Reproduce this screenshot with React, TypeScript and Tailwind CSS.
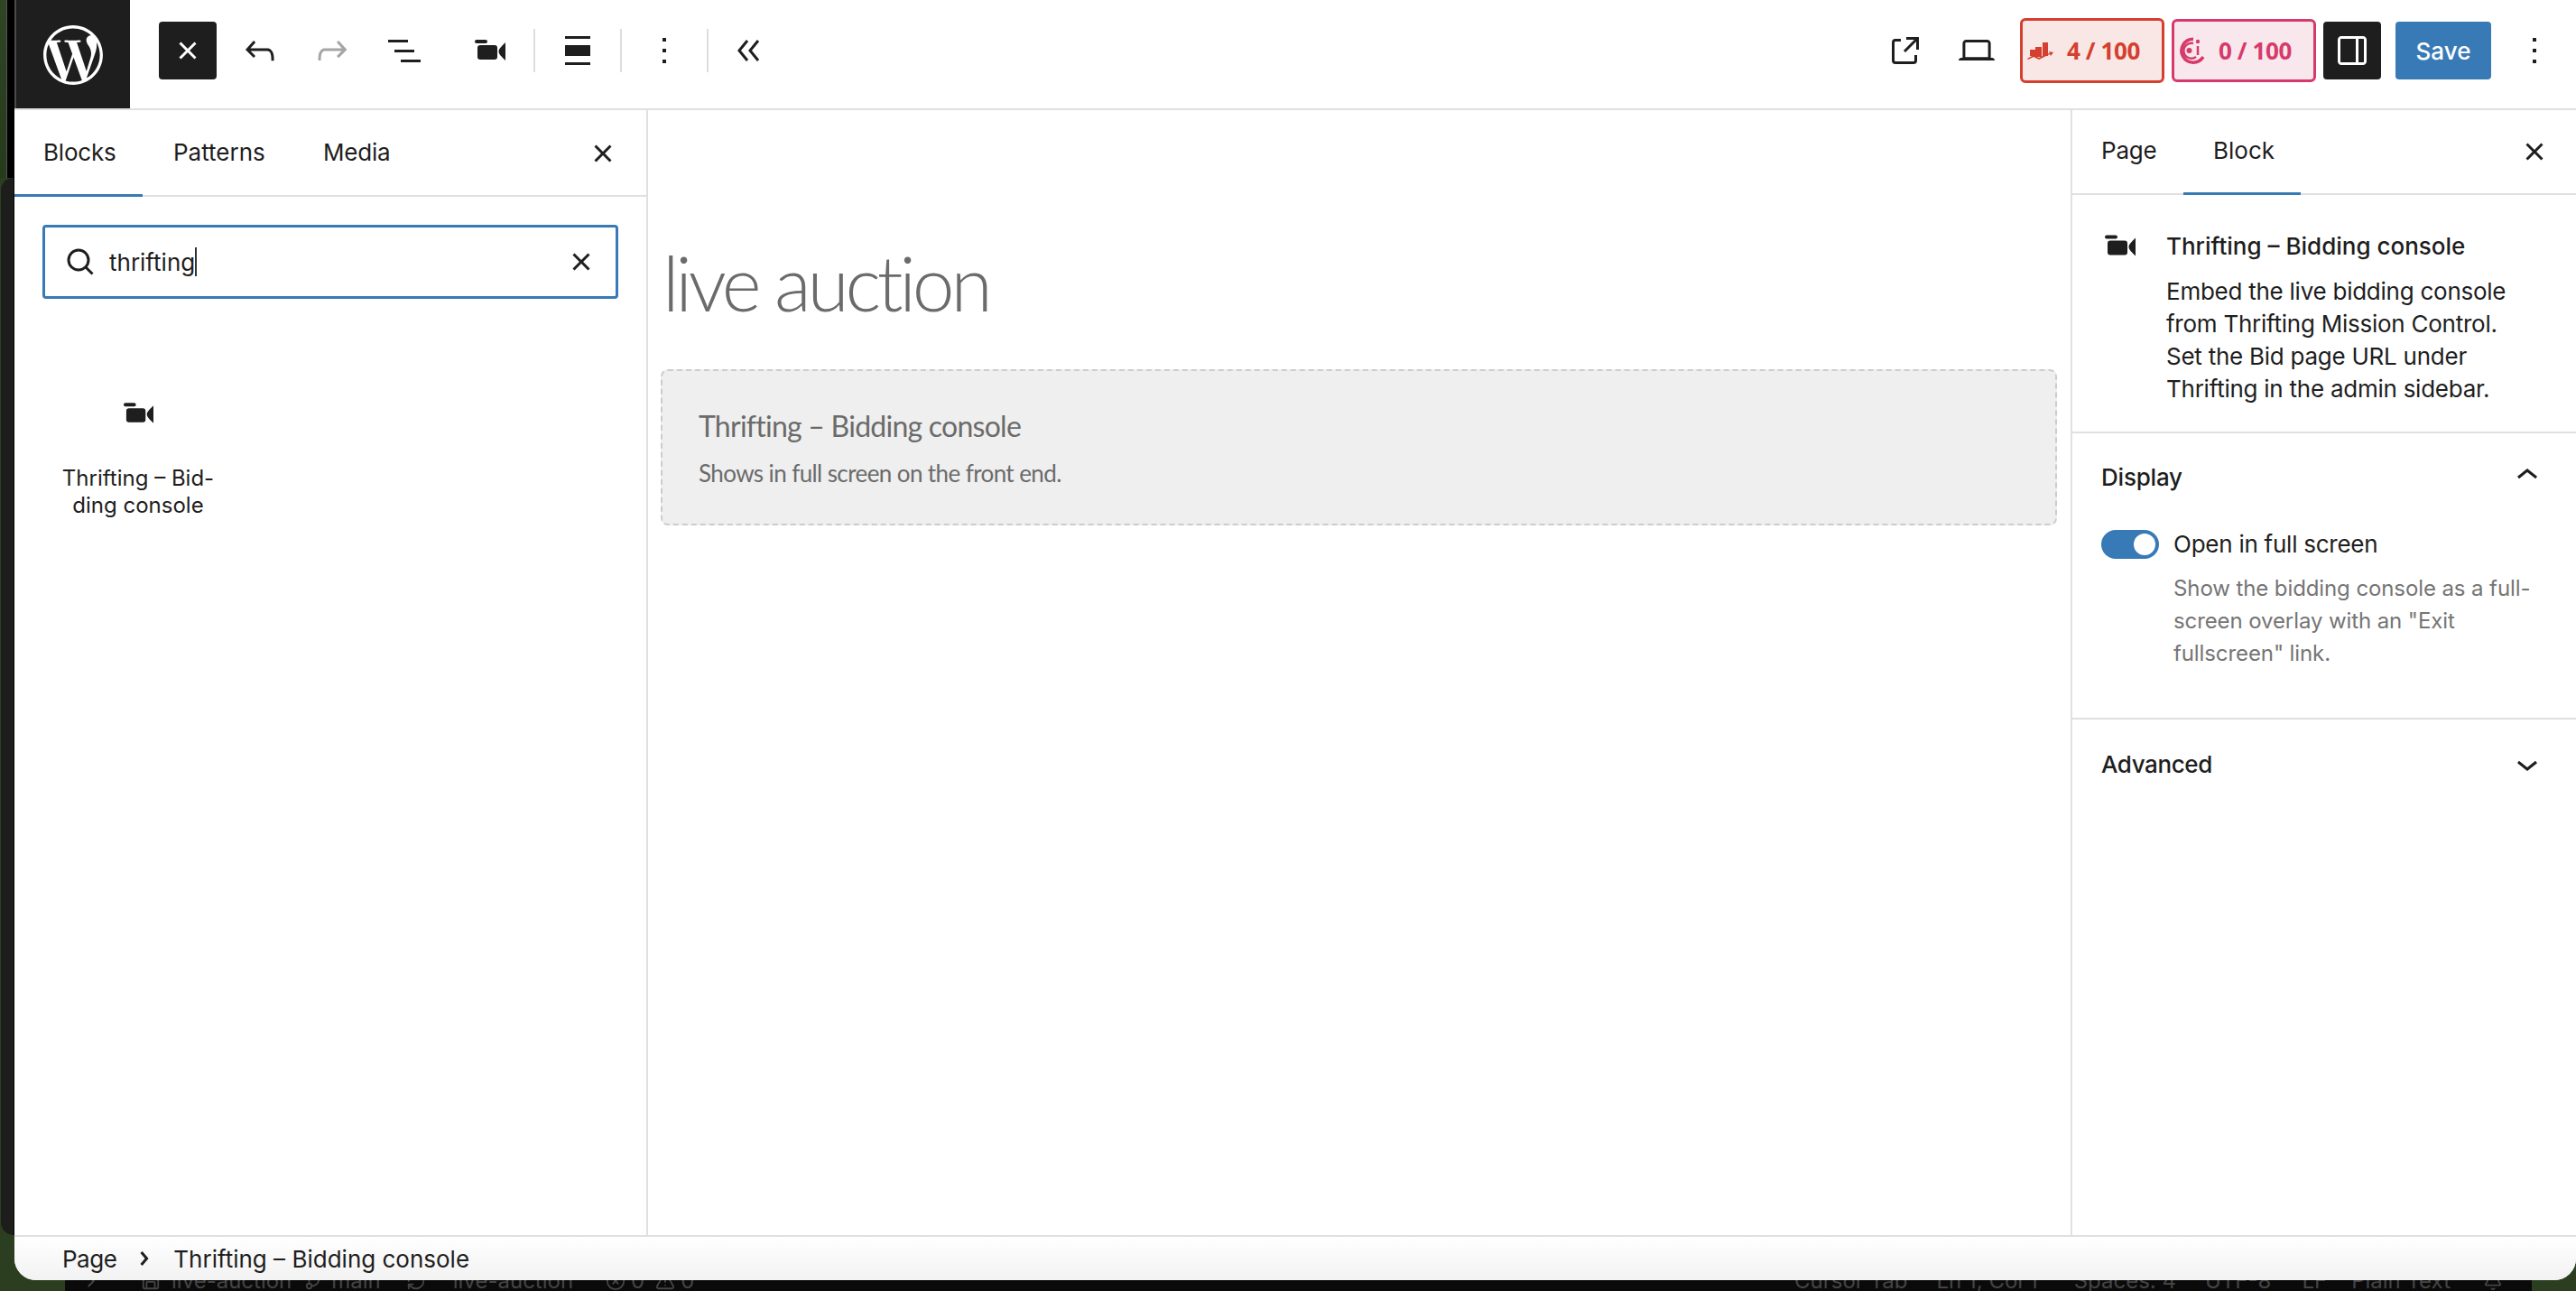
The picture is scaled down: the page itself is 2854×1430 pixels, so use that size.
import React from 'react';
import { FaWordpressSimple } from 'react-icons/fa';
import { Bell, ChevronRight, CircleX, GitBranch, RefreshCw, Save, TriangleAlert } from 'lucide-react';

const paths = {
  closeSmall: 'M12 13.06l3.712 3.713 1.061-1.06L13.061 12l3.712-3.712-1.06-1.06L12 10.938 8.288 7.227l-1.061 1.06L10.939 12l-3.712 3.712 1.06 1.061L12 13.061z',
  undo: 'M18.3 11.7c-.6-.6-1.4-.9-2.3-.9H6.7l2.9-3.3-1.1-1-4.5 5L8.5 16l1-1-2.7-2.7H16c.5 0 .9.2 1.3.5 1 1 1 3.4 1 4.5v.3h1.5v-.2c0-1.5 0-4.3-1.5-5.7z',
  redo: 'M15.6 6.5l-1.1 1 2.9 3.3H8c-.9 0-1.7.3-2.3.9-1.4 1.5-1.4 4.2-1.4 5.6v.2h1.5v-.3c0-1.1 0-3.5 1-4.5.3-.3.7-.5 1.3-.5h9.2L14.5 15l1.1 1.1 4.6-4.6-4.6-5z',
  listView: 'M3 6h11v1.5H3V6Zm3.5 5.5h11V13h-11v-1.5ZM21 17H10v1.5h11V17Z',
  alignNone: 'M19 5.5H5V4h14v1.5ZM19 20H5v-1.5h14V20ZM5 9h14v6H5V9Z',
  more: 'M13 19h-2v-2h2v2zm0-6h-2v-2h2v2zm0-6h-2V5h2v2z',
  external: 'M19.5 4.5h-7V6h4.44l-5.97 5.97 1.06 1.06L18 7.06v4.44h1.5v-7Zm-13 1a2 2 0 0 0-2 2v10a2 2 0 0 0 2 2h10a2 2 0 0 0 2-2v-3H17v3a.5.5 0 0 1-.5.5h-10a.5.5 0 0 1-.5-.5v-10a.5.5 0 0 1 .5-.5h3V5.5h-3Z',
  laptop: 'M20.5 16h-.7V8c0-1.1-.9-2-2-2H6.2c-1.1 0-2 .9-2 2v8h-.7c-.8 0-1.5.7-1.5 1.5h20c0-.8-.7-1.5-1.5-1.5zM5.7 8c0-.3.2-.5.5-.5h11.6c.3 0 .5.2.5.5v7.6H5.7V8z',
  drawer: 'M18 4H6c-1.1 0-2 .9-2 2v12c0 1.1.9 2 2 2h12c1.1 0 2-.9 2-2V6c0-1.1-.9-2-2-2zm-4 14.5H6c-.3 0-.5-.2-.5-.5V6c0-.3.2-.5.5-.5h8v13zm4.5-.5c0 .3-.2.5-.5.5h-2.5v-13H18c.3 0 .5.2.5.5v12z',
  chevronUp: 'M6.5 12.4L12 8l5.5 4.4-.9 1.2L12 10l-4.5 3.6-1-1.2z',
  chevronDown: 'M17.5 11.6L12 16l-5.5-4.4.9-1.2L12 14l4.5-3.6 1 1.2z',
  chevronRight: 'M10.8622 8.04053L14.2805 12.0286L10.8622 16.0167L9.72327 15.0405L12.3049 12.0286L9.72327 9.01672L10.8622 8.04053Z',
};

function Icon({ d, className = '' }: { d: string; className?: string }) {
  return (
    <svg viewBox="0 0 24 24" className={`h-[48px] w-[48px] shrink-0 fill-current ${className}`}>
      <path d={d} />
    </svg>
  );
}

function VideoIcon({ className = '' }: { className?: string }) {
  return (
    <svg viewBox="0 0 34 23" className={`shrink-0 fill-[#1e1e1e] ${className}`}>
      <rect x="0" y="0" width="14" height="4" rx="2" />
      <rect x="3" y="6" width="22" height="16" rx="3" />
      <path d="M34 3C30 7 26.500 10 26.500 13C26.500 16 30 19 34 23Z" />
    </svg>
  );
}

function ChartIcon() {
  return (
    <svg viewBox="0 0 29 19" className="h-[19px] w-[29px] shrink-0 fill-[#d43f2f]">
      <rect x="3" y="8" width="6" height="7" />
      <rect x="9" y="5" width="7" height="11" />
      <rect x="17" y="0" width="6" height="15" />
      <path d="M0 18l7-4 6 3 8-4 4-1-1-2 5 1-3 4-1-2-4 2-8 4-6-3-6 3z" />
    </svg>
  );
}

function AiIcon() {
  return (
    <svg viewBox="0 0 30 30" className="h-[30px] w-[30px] shrink-0 fill-none stroke-[#d63a6a]">
      <path d="M28 22A13 13 0 1 1 17 2.200" strokeWidth="3.500" />
      <path d="M20 22A8.500 8.500 0 1 1 17 7" strokeWidth="2.500" />
      <circle cx="12.500" cy="15" r="3" fill="#d63a6a" strokeWidth="0" />
      <path d="M22 10v10" strokeWidth="2.500" />
      <circle cx="22" cy="5" r="2.200" fill="#d63a6a" strokeWidth="0" />
    </svg>
  );
}

function Separator({ className = '' }: { className?: string }) {
  return <div className={`h-[48px] w-[2px] shrink-0 bg-[#dddddd] ${className}`} />;
}

function Header() {
  return (
    <header className="flex h-[122px] shrink-0 border-b-2 border-[#e0e0e0] text-[#1e1e1e]">
      <div className="flex h-[120px] w-[128px] shrink-0 items-center justify-center border-l-2 border-[#4a4a4a] bg-[#1e1e1e] pt-[1px] text-white">
        <FaWordpressSimple className="h-[68px] w-[68px]" />
      </div>
      <div className="flex h-[112px] flex-1 items-center">
        <div className="ml-[32px] flex h-[64px] w-[64px] items-center justify-center rounded-[4px] bg-[#1e1e1e] text-white">
          <Icon d={paths.closeSmall} />
        </div>
        <Icon d={paths.undo} className="ml-[24px]" />
        <Icon d={paths.redo} className="ml-[32px] text-[#a5a5a5]" />
        <Icon d={paths.listView} className="ml-[32px]" />
        <VideoIcon className="ml-[54px] mb-[2px] h-[23px] w-[34px]" />
        <Separator className="ml-[31px]" />
        <Icon d={paths.alignNone} className="ml-[23px]" />
        <Separator className="ml-[23px]" />
        <Icon d={paths.more} className="ml-[23px]" />
        <Separator className="ml-[23px]" />
        <svg viewBox="0 0 26 24" className="ml-[31px] h-[24px] w-[26px] fill-none stroke-[#1e1e1e] stroke-[3]">
          <path d="M12 1L3 12l9 11M24 1l-9 11 9 11" />
        </svg>
        <div className="ml-auto flex items-center pr-[22px]">
          <Icon d={paths.external} />
          <Icon d={paths.laptop} className="ml-[31px]" />
          <div className="ml-[24px] flex h-[72px] w-[160px] items-center rounded-[6px] border-[3px] border-[#d43f2f] bg-[#f8e7e4] pl-[5px] font-[family-name:'Open_Sans',sans-serif] text-[26px] font-bold tracking-[-0.4px] text-[#d43f2f]">
            <ChartIcon />
            <span className="ml-[15px] whitespace-nowrap">4 / 100</span>
          </div>
          <div className="ml-[8px] flex h-[70px] w-[160px] items-center rounded-[6px] border-[3px] border-[#d63a6a] bg-[#f9e7ee] pl-[4px] font-[family-name:'Open_Sans',sans-serif] text-[26px] font-bold tracking-[-0.4px] text-[#d63a6a]">
            <AiIcon />
            <span className="ml-[15px] whitespace-nowrap">0 / 100</span>
          </div>
          <div className="ml-[8px] flex h-[64px] w-[64px] items-center justify-center rounded-[4px] bg-[#1e1e1e] text-white">
            <Icon d={paths.drawer} />
          </div>
          <div className="ml-[16px] flex h-[64px] w-[106px] items-center justify-center rounded-[4px] bg-[#387ab6] text-[26px] font-medium text-white">
            Save
          </div>
          <Icon d={paths.more} className="ml-[24px]" />
        </div>
      </div>
    </header>
  );
}

function Inserter() {
  return (
    <aside className="flex w-[702px] shrink-0 flex-col border-r-2 border-[#e0e0e0] text-[#1e1e1e]">
      <div className="flex h-[96px] shrink-0 items-start border-b-2 border-[#e0e0e0]">
        <div className="flex h-[96px] w-[142px] items-center border-b-[3px] border-[#387ab6] pb-[1px] pl-[32px] tracking-[-0.2px]">Blocks</div>
        <div className="flex h-[96px] w-[167px] items-center pb-[4px] pl-[34px]">Patterns</div>
        <div className="flex h-[96px] w-[167px] items-center pb-[4px] pl-[33px] tracking-[-0.2px]">Media</div>
        <Icon d={paths.closeSmall} className="ml-auto mr-[24px] mt-[24px]" />
      </div>
      <div className="ml-[31px] mt-[31px] flex h-[82px] w-[638px] items-center rounded-[4px] border-[3px] border-[#387ab6] pl-[24px] pr-[14px]">
        <svg viewBox="0 0 30 30" className="h-[30px] w-[30px] shrink-0 fill-none stroke-[#1e1e1e] stroke-[3]">
          <circle cx="13" cy="13" r="11" />
          <path d="M20.500 20.500l8 8" />
        </svg>
        <span className="ml-[17px]">thrifting</span>
        <span className="h-[32px] w-[2px] bg-[#333333]" />
        <Icon d={paths.closeSmall} className="ml-auto" />
      </div>
      <div className="ml-[29px] mt-[115px] flex w-[216px] flex-col items-center">
        <VideoIcon className="h-[23px] w-[33px]" />
        <p className="mt-[46px] text-center text-[24px] leading-[30px]">
          Thrifting – Bid-
          <br />
          ding console
        </p>
      </div>
    </aside>
  );
}

function Canvas() {
  return (
    <main className="min-w-0 flex-1 font-[family-name:Lato,sans-serif] text-[#6b6b6b]">
      <h1 className="ml-[16px] mt-[141px] text-[84px] font-light leading-[100px] tracking-[-4.2px]">live auction</h1>
      <div className="ml-[14px] mr-[15px] mt-[46px] h-[173px] rounded-[8px] border-2 border-dashed border-[#cccccc] bg-[#efefef] pl-[40px] pt-[41px]">
        <p className="text-[32px] leading-[40px] tracking-[-0.75px]">Thrifting – Bidding console</p>
        <p className="mt-[15px] text-[26px] leading-[34px] tracking-[-0.6px]">Shows in full screen on the front end.</p>
      </div>
    </main>
  );
}

function Settings() {
  return (
    <aside className="flex w-[560px] shrink-0 flex-col border-l-2 border-[#e0e0e0] text-[#1e1e1e]">
      <div className="flex h-[94px] shrink-0 items-start border-b-2 border-[#e0e0e0]">
        <div className="flex h-[94px] w-[123px] items-center pb-[5px] pl-[32px] tracking-[-0.2px]">Page</div>
        <div className="flex h-[94px] w-[130px] items-center border-b-[3px] border-[#387ab6] pb-[2px] pl-[33px]">Block</div>
        <Icon d={paths.closeSmall} className="ml-auto mr-[22px] mt-[22px]" />
      </div>
      <section className="flex h-[264px] shrink-0 border-b-2 border-[#e0e0e0] pl-[36px] pt-[39px]">
        <VideoIcon className="mt-[5px] h-[24px] w-[34px]" />
        <div className="ml-[34px] leading-[36px]">
          <h2 className="font-medium">Thrifting – Bidding console</h2>
          <p className="mt-[14px] tracking-[-0.25px]">
            Embed the live bidding console
            <br />
            from Thrifting Mission Control.
            <br />
            Set the Bid page URL under
            <br />
            Thrifting in the admin sidebar.
          </p>
        </div>
      </section>
      <section className="h-[317px] shrink-0 border-b-2 border-[#e0e0e0]">
        <div className="flex h-[96px] items-center pl-[32px] pr-[30px]">
          <h2 className="font-medium tracking-[-0.2px]">Display</h2>
          <Icon d={paths.chevronUp} className="ml-auto mb-[3px]" />
        </div>
        <div className="flex pl-[32px] pt-[9px]">
          <div className="mt-[2px] flex h-[32px] w-[64px] items-center justify-end rounded-full bg-[#387ab6] pr-[4px]">
            <div className="h-[24px] w-[24px] rounded-full bg-white" />
          </div>
          <div className="ml-[16px]">
            <p className="leading-[36px] tracking-[-0.25px]">Open in full screen</p>
            <p className="mt-[13px] text-[24px] leading-[36px] tracking-[-0.1px] text-[#757575]">
              Show the bidding console as a full-
              <br />
              screen overlay with an "Exit
              <br />
              fullscreen" link.
            </p>
          </div>
        </div>
      </section>
      <div className="flex h-[98px] shrink-0 items-center pl-[32px] pr-[30px]">
        <h2 className="font-medium tracking-[-0.4px]">Advanced</h2>
        <Icon d={paths.chevronDown} className="ml-auto" />
      </div>
    </aside>
  );
}

function Footer() {
  return (
    <footer className="flex h-[50px] shrink-0 items-center border-t-2 border-[#e0e0e0] bg-gradient-to-b from-white to-[#f2f2f2] pl-[53px] text-[#1e1e1e]">
      <span className="tracking-[-0.5px]">Page</span>
      <Icon d={paths.chevronRight} className="ml-[7px]" />
      <span className="ml-[8px]">Thrifting – Bidding console</span>
    </footer>
  );
}

// what shows of the desktop window behind, cut off by the browser window
function StatusPeek() {
  const icon = 'h-[22px] w-[22px] shrink-0';
  return (
    <div className="ml-[72px] mr-[49px] flex h-[12px] items-start overflow-hidden bg-[#0a0a0a] text-[24px] leading-[24px] whitespace-nowrap text-[#444444]">
      <div className="-mt-[11px] flex flex-1 items-center">
        <ChevronRight className={`${icon} ml-[18px]`} />
        <Save className={`${icon} ml-[44px]`} />
        <span className="ml-[12px]">live-auction</span>
        <GitBranch className={`${icon} ml-[14px]`} />
        <span className="ml-[8px]">main</span>
        <RefreshCw className={`${icon} ml-[28px]`} />
        <span className="ml-[30px]">live-auction</span>
        <CircleX className={`${icon} ml-[36px]`} />
        <span className="ml-[6px]">0</span>
        <TriangleAlert className={`${icon} ml-[12px]`} />
        <span className="ml-[6px]">0</span>
        <span className="ml-auto">Cursor Tab</span>
        <span className="ml-[32px]">Ln 1, Col 1</span>
        <span className="ml-[40px]">Spaces: 4</span>
        <span className="ml-[32px]">UTF-8</span>
        <span className="ml-[34px]">LF</span>
        <span className="ml-[27px]">Plain Text</span>
        <Bell className={`${icon} ml-[36px] mr-[32px]`} />
      </div>
    </div>
  );
}

export default function App() {
  return (
    <div className="flex h-[1430px] w-[2854px] flex-col overflow-hidden bg-[#2b3f20] font-[family-name:Inter,sans-serif] text-[26px]">
      <div className="flex h-[1418px] shrink-0">
        <div className="flex w-[16px] shrink-0 flex-col">
          <div className="flex h-[197px] shrink-0">
            <div className="w-[7px] bg-gradient-to-b from-[#2f4524] to-[#263a1c]" />
            <div className="w-[1px] bg-[#555555]" />
            <div className="w-[8px] bg-black" />
          </div>
          <div className="mb-[50px] flex-1 pl-[1px]">
            <div className="h-full rounded-l-[14px] border-r border-black bg-[#1d1e1b]" />
          </div>
        </div>
        <div className="flex min-w-0 flex-1 flex-col overflow-hidden rounded-b-[24px] bg-white">
          <Header />
          <div className="flex min-h-0 flex-1">
            <Inserter />
            <Canvas />
            <Settings />
          </div>
          <Footer />
        </div>
      </div>
      <StatusPeek />
    </div>
  );
}
